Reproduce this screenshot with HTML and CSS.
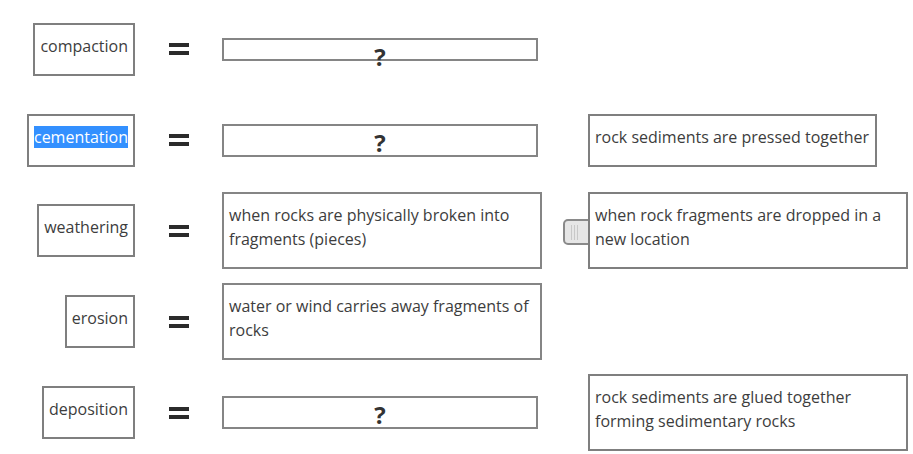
FILE: index.html
```html
<!DOCTYPE html>
<html>
<head>
<meta charset="utf-8">
<link rel="stylesheet" href="styles.css">
</head>
<body>
<div class="board">
  <div class="term">compaction</div>
  <div class="eq"><span></span><span></span></div>
  <div class="slot empty short"><span class="q">?</span></div>
  <div class="spare"></div>

  <div class="term"><span class="sel">cementation</span></div>
  <div class="eq"><span></span><span></span></div>
  <div class="slot empty"><span class="q">?</span></div>
  <div class="card fit">rock sediments are pressed together</div>

  <div class="term">weathering</div>
  <div class="eq"><span></span><span></span></div>
  <div class="slot filled">when rocks are physically broken into fragments (pieces)</div>
  <div class="card tall"><div class="handle"><i></i><i></i><i></i></div>when rock fragments are dropped in a new location</div>

  <div class="term">erosion</div>
  <div class="eq"><span></span><span></span></div>
  <div class="slot filled">water or wind carries away fragments of rocks</div>
  <div class="spare"></div>

  <div class="term">deposition</div>
  <div class="eq"><span></span><span></span></div>
  <div class="slot empty"><span class="q">?</span></div>
  <div class="card tall">rock sediments are glued together forming sedimentary rocks</div>
</div>
</body>
</html>
```

FILE: styles.css
```css
html {
  background: #ffffff;
}

body {
  margin: 0;
  padding: 0;
  font-family: "Open Sans", "DejaVu Sans", sans-serif;
  font-size: 16px;
  line-height: 24px;
  color: #3d3d3d;
}

.board {
  display: grid;
  grid-template-columns: 135px 87px 366px 320px;
  grid-auto-rows: 90.8px;
  align-items: center;
  padding-top: 4px;
}

.term {
  justify-self: end;
  box-sizing: border-box;
  height: 53px;
  border: 2px solid #7f7f7f;
  padding: 9px 5px 0 5px;
  white-space: nowrap;
}

.sel {
  background: #3390ff;
  color: #ffffff;
}

.eq {
  justify-self: center;
  display: flex;
  flex-direction: column;
  gap: 4px;
  width: 20px;
}

.eq span {
  display: block;
  height: 4px;
  background: #2b2b2b;
}

.slot {
  justify-self: start;
  box-sizing: border-box;
  border: 2px solid #858585;
}

.slot.empty {
  width: 316px;
  height: 33px;
  text-align: center;
  padding-top: 2px;
}

.slot.empty.short {
  height: 23px;
}

.q {
  display: block;
  font-weight: bold;
  font-size: 24px;
  line-height: 30px;
  color: #333333;
}

.slot.filled {
  width: 320px;
  height: 77px;
  padding: 9px 6px 0 5px;
}

.card {
  position: relative;
  justify-self: start;
  box-sizing: border-box;
  border: 2px solid #7f7f7f;
  padding: 9px 6px 0 5px;
  background: #ffffff;
}

.card.fit {
  height: 53px;
  white-space: nowrap;
}

.card.tall {
  width: 320px;
  height: 77px;
}

.handle {
  position: absolute;
  left: -27px;
  top: 25px;
  width: 30px;
  height: 26px;
  box-sizing: border-box;
  border: 2px solid #8a8a8a;
  border-radius: 5px;
  background: #e6e6e6;
  display: flex;
  gap: 2px;
  padding-left: 6px;
  align-items: center;
  z-index: -1;
}

.handle i {
  display: block;
  width: 1px;
  height: 15px;
  background: #c8c8c8;
}
```
